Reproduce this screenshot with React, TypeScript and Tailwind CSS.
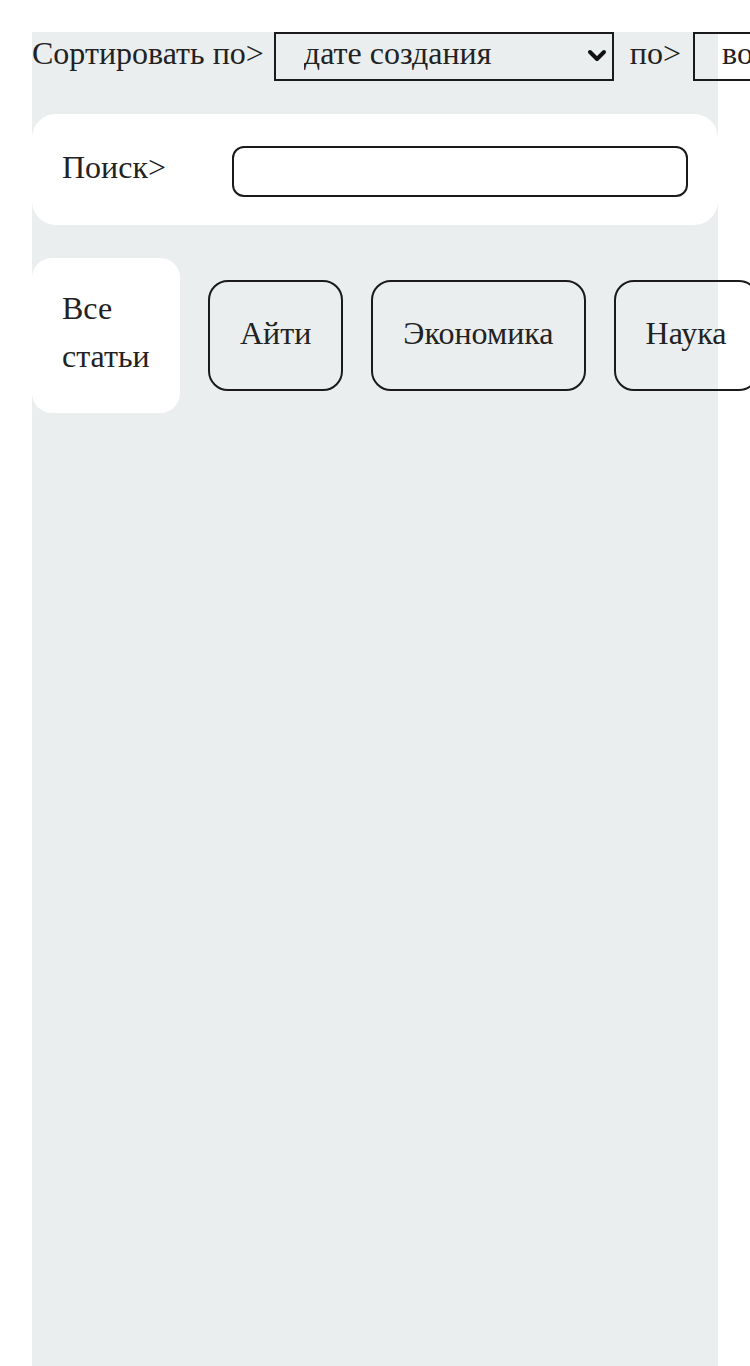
import React from "react";

const categories = ["Айти", "Экономика", "Наука"];

function Chevron() {
    return (
        <svg
            className="pointer-events-none absolute right-[7px] top-[17px]"
            width="20"
            height="13"
            viewBox="0 0 20 13"
            fill="none"
        >
            <path d="M3 3 L10 10 L17 3" stroke="#111" strokeWidth="4" strokeLinecap="round" strokeLinejoin="round" />
        </svg>
    );
}

export default function App() {
    return (
        <div className="min-h-screen bg-white px-8 pt-8 font-['Liberation_Serif',serif] text-[32px] text-[#222]">
            <div className="min-h-[1334px] bg-[#eaeeef]">
                {/* сортировка */}
                <div className="flex items-center whitespace-nowrap h-[49px]">
                    <span className="leading-[49px] -mt-[7px]">Сортировать по&gt;</span>
                    <div className="relative ml-[10px] shrink-0">
                        <select
                            className="block appearance-none w-[340px] h-[49px] border-2 border-[#1a1a1a] pl-[28px] pr-[34px] pt-0 pb-[7px] leading-[36px] bg-transparent"
                            defaultValue="created"
                        >
                            <option value="created">дате создания</option>
                            <option value="title">названию</option>
                        </select>
                        <Chevron />
                    </div>
                    <span className="ml-[16px] leading-[49px] -mt-[7px]">по&gt;</span>
                    <div className="relative ml-[12px] shrink-0">
                        <select
                            className="block appearance-none w-[260px] h-[49px] border-2 border-[#1a1a1a] pl-[27px] pr-[34px] pt-0 pb-[7px] leading-[36px] bg-transparent"
                            defaultValue="asc"
                        >
                            <option value="asc">возрастанию</option>
                            <option value="desc">убыванию</option>
                        </select>
                        <Chevron />
                    </div>
                </div>

                {/* поиск */}
                <div className="mt-[33px] flex items-center bg-white rounded-[24px] px-[30px] h-[111px]">
                    <span className="w-[170px] shrink-0 -mt-[6px]">Поиск&gt;</span>
                    <input
                        type="text"
                        className="flex-1 h-[51px] mt-[3px] rounded-[12px] border-2 border-[#1a1a1a] px-4 outline-none"
                    />
                </div>

                {/* категории */}
                <div className="mt-[33px] flex items-center gap-[28px] whitespace-nowrap">
                    <div className="bg-white rounded-[20px] px-[30px] pt-[26px] pb-[33px] leading-[48px] w-[148px] shrink-0 whitespace-normal">
                        Все
                        <br />
                        статьи
                    </div>
                    {categories.map((c) => (
                        <button
                            key={c}
                            className="h-[111px] shrink-0 rounded-[20px] border-2 border-[#1a1a1a] px-[30px] pb-[6px] leading-[48px]"
                        >
                            {c}
                        </button>
                    ))}
                </div>
            </div>
        </div>
    );
}
